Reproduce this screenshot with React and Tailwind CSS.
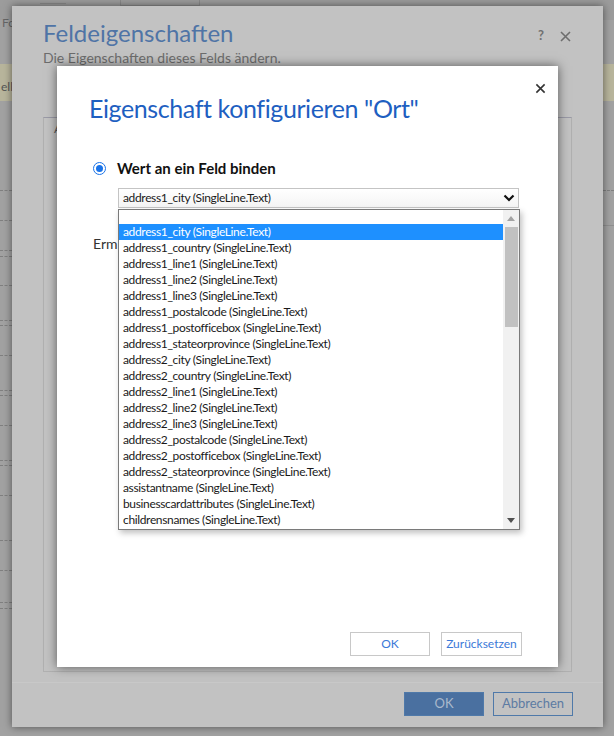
import React from 'react'

const fields = [
  'address1_city',
  'address1_country',
  'address1_line1',
  'address1_line2',
  'address1_line3',
  'address1_postalcode',
  'address1_postofficebox',
  'address1_stateorprovince',
  'address2_city',
  'address2_country',
  'address2_line1',
  'address2_line2',
  'address2_line3',
  'address2_postalcode',
  'address2_postofficebox',
  'address2_stateorprovince',
  'assistantname',
  'businesscardattributes',
  'childrensnames',
]

const font = { fontFamily: 'Lato, "Noto Sans", sans-serif' }

function Dashes({ top }) {
  return (
    <div className="absolute left-0 w-[12px] border-t border-dashed border-[#808080]" style={{ top }} />
  )
}

function DropdownList() {
  return (
    <div className="absolute left-[118px] top-[209px] w-[402px] h-[321px] bg-white border border-[#7a7a7a] shadow-[2px_3px_6px_rgba(0,0,0,0.25)] flex">
      <div className="flex-1 flex flex-col text-[12px] leading-[16px] tracking-[-0.35px] text-[#1a1a1a]">
        <div className="h-[14px]" />
        {fields.map((f, i) => (
          <div
            key={f}
            className={
              'pl-[4px] h-[16px] whitespace-nowrap ' +
              (i === 0 ? 'bg-[#1e90ff] text-white' : '')
            }
          >
            {f} (SingleLine.Text)
          </div>
        ))}
      </div>
      <div className="w-[16px] bg-[#f1f1f1] flex flex-col items-center">
        <div className="h-[17px] flex items-center justify-center">
          <svg width="8" height="5" viewBox="0 0 8 5"><path d="M0 5L4 0L8 5Z" fill="#a3a3a3" /></svg>
        </div>
        <div className="w-[13px] h-[100px] bg-[#c1c1c1]" />
        <div className="flex-1" />
        <div className="h-[17px] flex items-center justify-center">
          <svg width="8" height="5" viewBox="0 0 8 5"><path d="M0 0L8 0L4 5Z" fill="#505050" /></svg>
        </div>
      </div>
    </div>
  )
}

function InnerDialog() {
  return (
    <div className="absolute left-[57px] top-[66px] w-[501px] h-[601px] bg-white shadow-[0_0_10px_rgba(0,0,0,0.55)]">
      <button className="absolute right-[12px] top-[17px] text-[#333]">
        <svg width="11" height="11" viewBox="0 0 12 12"><path d="M1.5 1.5L10.5 10.5M10.5 1.5L1.5 10.5" stroke="#333" strokeWidth="1.7" /></svg>
      </button>
      <h1 className="pl-[32px] pt-[24px] text-[25px] leading-[36px] tracking-[-0.4px] text-[#1e5fc1]">
        Eigenschaft konfigurieren "Ort"
      </h1>

      <div className="flex items-center pl-[36px] pt-[31px] gap-[11px]">
        <span className="w-[13px] h-[13px] rounded-full border-[1.5px] border-[#1a73e8] flex items-center justify-center">
          <span className="w-[7px] h-[7px] rounded-full bg-[#1a73e8]" />
        </span>
        <span className="text-[15px] font-bold text-[#111]">Wert an ein Feld binden</span>
      </div>

      <div className="ml-[61px] mt-[8px] w-[401px] h-[20px] border border-[#c4c4c4] bg-gradient-to-b from-white to-[#f4f4f4] flex items-center justify-between pl-[4px] pr-[3px] text-[12px] tracking-[-0.35px] text-[#1a1a1a]">
        <span>address1_city (SingleLine.Text)</span>
        <svg width="12" height="8" viewBox="0 0 12 8"><path d="M1.5 1.5L6 6L10.5 1.5" stroke="#111" strokeWidth="2.2" fill="none" /></svg>
      </div>

      <div className="ml-[36px] mt-[25px] text-[14px] text-[#333]">Erm</div>

      <div className="absolute right-[36px] bottom-[11px] flex gap-[11px]">
        <button className="w-[80px] h-[24px] border border-[#c8c8c8] text-[12px] text-[#3b79d8] bg-white">OK</button>
        <button className="w-[81px] h-[24px] border border-[#c8c8c8] text-[12px] text-[#3b79d8] bg-white">Zurücksetzen</button>
      </div>
    </div>
  )
}

function OuterDialog() {
  return (
    <div className="absolute left-[12px] top-[6px] w-[591px] h-[721px] bg-[#c2c2c2] shadow-[0_0_8px_rgba(0,0,0,0.5)] flex flex-col">
      <div className="flex justify-between pl-[31px] pr-[32px] pt-[12px]">
        <div>
          <div className="text-[24px] leading-[30px] text-[#4f74a6]">Feldeigenschaften</div>
          <div className="text-[14px] leading-[18px] text-[#6c6c6c] mt-[1px]">Die Eigenschaften dieses Felds ändern.</div>
        </div>
        <div className="flex items-center gap-[16px] h-[32px] pt-[4px] text-[#707070]">
          <span className="text-[13px] font-bold">?</span>
          <svg width="11" height="11" viewBox="0 0 11 11"><path d="M1 1L10 10M10 1L1 10" stroke="#6e6e6e" strokeWidth="1.6" /></svg>
        </div>
      </div>
      <div className="mx-[31px] mt-[50px] h-[555px] border border-[#b0b0b0] border-t-[#9a9aa6]">
        <div className="pl-[10px] pt-[2px] text-[12px] text-[#555]">A</div>
      </div>
      <div className="mt-[10px] border-t border-[#c8c8c8]" />
      <div className="flex justify-end gap-[9px] pr-[30px] pt-[9px]">
        <button className="w-[80px] h-[24px] bg-[#4a70a0] border border-[#4f79a9] text-[13px] text-[#a9b9cc]">OK</button>
        <button className="w-[80px] h-[24px] border border-[#4f79a9] text-[13px] text-[#5d7ba3]">Abbrechen</button>
      </div>
    </div>
  )
}

export default function App() {
  return (
    <div className="relative w-[614px] h-[736px] overflow-hidden bg-[#a2a2a2]" style={font}>
      {/* page behind the overlay */}
      <div className="absolute left-0 top-0 w-[614px] h-[20px] bg-[#9c9c9c]">
        <div className="absolute left-[40px] top-[0px] w-[26px] h-[4px] border-b border-[#8a8a8a]" />
        <div className="absolute left-[120px] top-[0px] w-[80px] h-[6px] border border-t-0 border-[#8a8a8a]" />
      </div>
      <div className="absolute left-[2px] top-[14px] text-[12px] text-[#666]">Fo</div>
      <div className="absolute left-0 top-[64px] w-[614px] h-[37px] bg-[#b8b59c]">
        <div className="pl-[1px] pt-[14px] text-[12px] text-[#555]">ell</div>
      </div>
      <Dashes top={190} />
      <Dashes top={220} />
      <Dashes top={250} />
      <Dashes top={256} />
      <Dashes top={285} />
      <Dashes top={320} />
      <Dashes top={325} />
      <Dashes top={355} />
      <Dashes top={390} />
      <Dashes top={395} />
      <Dashes top={425} />
      <Dashes top={460} />
      <Dashes top={465} />
      <Dashes top={495} />
      <Dashes top={540} />
      <Dashes top={570} />
      <Dashes top={602} />
      <Dashes top={608} />
      <div className="absolute right-0 top-[190px] w-[11px] border-t border-dashed border-[#808080]" />
      <div className="absolute right-0 top-[225px] w-[11px] border-t border-[#909090]" />

      <OuterDialog />
      <InnerDialog />
      <DropdownList />
    </div>
  )
}
